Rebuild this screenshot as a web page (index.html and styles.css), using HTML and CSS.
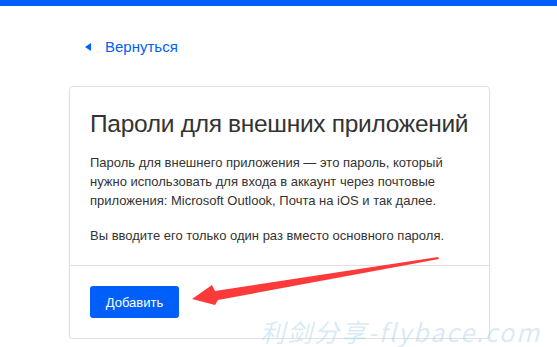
FILE: index.html
```html
<!DOCTYPE html>
<html lang="ru">
<head>
    <meta charset="UTF-8">
    <meta name="viewport" content="width=device-width, initial-scale=1.0">
    <title>Пароли для внешних приложений</title>
    <link rel="stylesheet" href="styles.css">
</head>
<body>
    <div class="topbar"></div>

    <div class="page">
        <a class="back" href="#"><span class="back-arrow"></span>Вернуться</a>

        <div class="card">
            <div class="card-body">
                <h1>Пароли для внешних приложений</h1>
                <p>Пароль для внешнего приложения — это пароль, который нужно использовать для входа в аккаунт через почтовые приложения: Microsoft Outlook, Почта на iOS и так далее.</p>
                <p>Вы вводите его только один раз вместо основного пароля.</p>
            </div>
            <div class="card-footer">
                <button class="btn">Добавить</button>
            </div>
        </div>
    </div>

    <!-- стрелка поверх скриншота -->
    <svg class="pointer" width="557" height="347" viewBox="0 0 557 347">
        <polygon points="192,299 212,285 215,291 438,257 439,259 218,300 215,305" fill="#fc3a3a"/>
    </svg>

    <div class="watermark">利剑分享-flybace.com</div>
</body>
</html>
```

FILE: styles.css
```css
body {
    margin: 0;
    font-family: 'Liberation Sans', Arial, sans-serif;
    color: #333;
    background: #fff;
    overflow: hidden;
}
.topbar {
    height: 6px;
    background-color: #005ff9;
}
.page {
    padding: 32px 0 0 69px;
    width: 421px;
}
.back {
    display: flex;
    align-items: center;
    margin-left: 16px;
    font-size: 15px;
    line-height: 18px;
    color: #005ff9;
    text-decoration: none;
}
.back-arrow {
    width: 0;
    height: 0;
    border-top: 4px solid transparent;
    border-bottom: 4px solid transparent;
    border-right: 6px solid #005ff9;
    margin-right: 14px;
}
.card {
    margin-top: 30px;
    border: 1px solid #e0e0e0;
    border-radius: 4px;
    box-shadow: 0 1px 2px rgba(0, 0, 0, 0.08);
}
.card-body {
    padding: 20px 20px 20px 20px;
    border-bottom: 1px solid #e0e0e0;
}
h1 {
    margin: 0 0 12px 0;
    font-size: 24.5px;
    font-weight: normal;
    letter-spacing: -0.3px;
    line-height: 34px;
    color: #333;
    white-space: nowrap;
}
p {
    margin: 0 0 16px 0;
    font-size: 13px;
    line-height: 19px;
}
p:last-child {
    margin-bottom: 0;
}
.card-footer {
    padding: 20px;
}
.btn {
    display: block;
    width: 89px;
    height: 32px;
    border: none;
    border-radius: 3px;
    background-color: #005ff9;
    color: #fff;
    font-family: 'Liberation Sans', Arial, sans-serif;
    font-size: 13px;
}
.pointer {
    position: absolute;
    top: 0;
    left: 0;
}
.watermark {
    position: absolute;
    left: 260px;
    top: 318px;
    font-family: 'Noto Sans CJK SC', 'DejaVu Sans', sans-serif;
    font-size: 25px;
    line-height: 27px;
    font-style: italic;
    letter-spacing: 2px;
    color: rgba(170, 208, 238, 0.45);
    white-space: nowrap;
}
```
